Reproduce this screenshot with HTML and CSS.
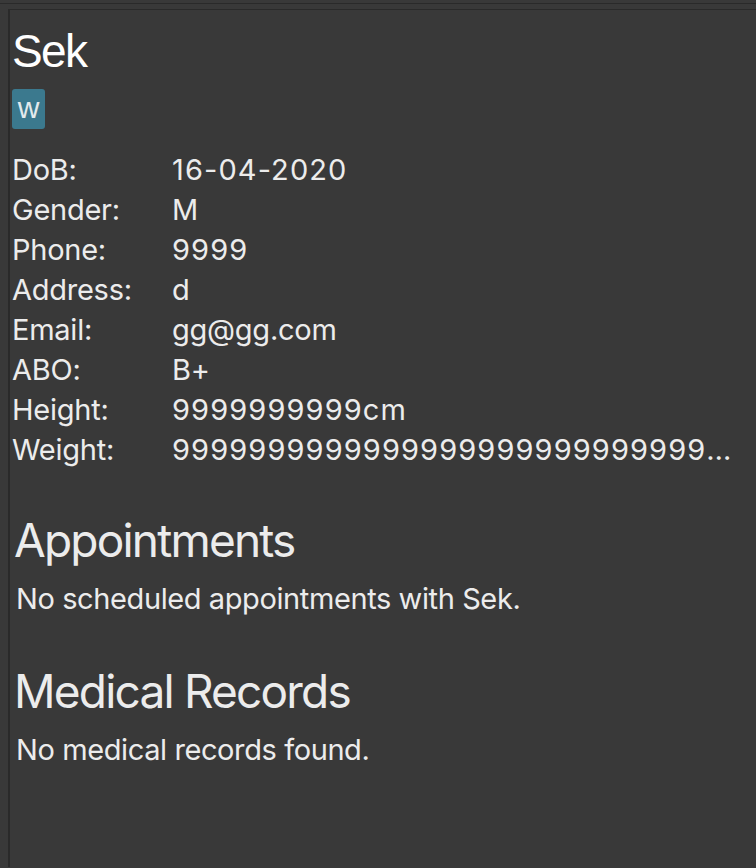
FILE: index.html
```html
<!DOCTYPE html>
<html>
<head>
<meta charset="utf-8">
<link rel="stylesheet" href="styles.css">
</head>
<body>
<div class="frame">
  <div class="panel">
    <h1 class="name">Sek</h1>
    <div class="tags"><span class="tag">w</span></div>
    <div class="details">
      <div class="row"><span class="label">DoB:</span><span class="value num">16-04-2020</span></div>
      <div class="row"><span class="label">Gender:</span><span class="value">M</span></div>
      <div class="row"><span class="label">Phone:</span><span class="value num">9999</span></div>
      <div class="row"><span class="label">Address:</span><span class="value">d</span></div>
      <div class="row"><span class="label">Email:</span><span class="value">gg@gg.com</span></div>
      <div class="row"><span class="label">ABO:</span><span class="value">B+</span></div>
      <div class="row"><span class="label">Height:</span><span class="value num">9999999999cm</span></div>
      <div class="row"><span class="label">Weight:</span><span class="value num">999999999999999999999999999999999999999999kg</span></div>
    </div>
    <h2 class="section">Appointments</h2>
    <p class="empty">No scheduled appointments with Sek.</p>
    <h2 class="section">Medical Records</h2>
    <p class="empty">No medical records found.</p>
  </div>
</div>
</body>
</html>
```
FILE: styles.css
```css
html, body {
  margin: 0;
  padding: 0;
  background: #393939;
  height: 100%;
}
.frame {
  margin-top: 3px;
  border-top: 1px solid #2a2a2a;
  height: calc(100% - 4px);
  box-sizing: border-box;
  padding-top: 5px;
  padding-left: 8px;
}
.panel {
  border-top: 1px solid #2a2a2a;
  border-left: 2px solid #2a2a2a;
  height: 100%;
  box-sizing: border-box;
  padding: 0 0 0 2px;
  color: #ececec;
  font-family: Inter, "Noto Sans", sans-serif;
  overflow: hidden;
}
.name {
  margin: 16px 0 0 0;
  font-family: "Liberation Sans", Arial, sans-serif;
  font-weight: normal;
  font-size: 46px;
  line-height: 50px;
  letter-spacing: -1.6px;
  color: #ffffff;
}
.tags {
  margin-top: 13px;
  display: flex;
}
.tag {
  display: flex;
  align-items: center;
  justify-content: center;
  width: 33px;
  height: 40px;
  padding-bottom: 2px;
  box-sizing: border-box;
  background: #3b798e;
  border-radius: 3px;
  color: #e2eaed;
  font-family: "Liberation Sans", Arial, sans-serif;
  font-size: 30px;
}
.details {
  margin-top: 21px;
  display: flex;
  flex-direction: column;
}
.row {
  display: grid;
  grid-template-columns: 160px minmax(0, 1fr);
  height: 40px;
  line-height: 40px;
  font-size: 29px;
  letter-spacing: -0.25px;
}
.label, .value {
  white-space: nowrap;
  overflow: hidden;
  text-overflow: ellipsis;
}
.value {
  padding-right: 16px;
}
.num {
  letter-spacing: 1.1px;
}
.section {
  margin: 45px 0 0 2px;
  font-weight: normal;
  font-size: 46px;
  line-height: 50px;
  letter-spacing: -1.8px;
}
.empty {
  margin: 14px 0 0 4px;
  font-size: 29px;
  line-height: 40px;
  letter-spacing: -0.4px;
}
.section + .empty {
  margin-top: 14px;
}
.empty + .section {
  margin-top: 47px;
}
```
